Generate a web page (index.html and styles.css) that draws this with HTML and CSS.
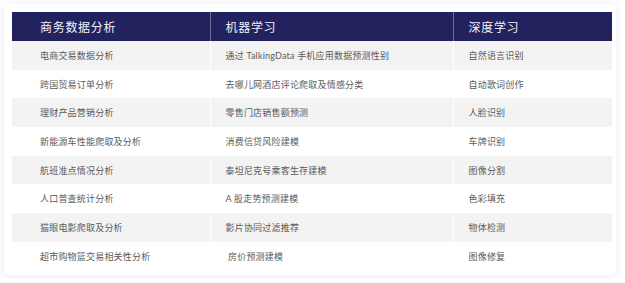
FILE: index.html
```html
<!DOCTYPE html>
<html lang="zh-CN">
<head>
<meta charset="utf-8">
<title>课程项目</title>
<link rel="stylesheet" href="styles.css">
</head>
<body>
<div class="card">
  <table class="grid">
    <colgroup>
      <col class="c1"><col class="c2"><col class="c3">
    </colgroup>
    <thead>
      <tr>
        <th class="first">商务数据分析</th>
        <th>机器学习</th>
        <th>深度学习</th>
      </tr>
    </thead>
    <tbody>
      <tr><td class="first">电商交易数据分析</td><td>通过 TalkingData 手机应用数据预测性别</td><td>自然语言识别</td></tr>
      <tr><td class="first">跨国贸易订单分析</td><td>去哪儿网酒店评论爬取及情感分类</td><td>自动歌词创作</td></tr>
      <tr><td class="first">理财产品营销分析</td><td>零售门店销售额预测</td><td>人脸识别</td></tr>
      <tr><td class="first">新能源车性能爬取及分析</td><td>消费信贷风险建模</td><td>车牌识别</td></tr>
      <tr><td class="first">航班准点情况分析</td><td>泰坦尼克号乘客生存建模</td><td>图像分割</td></tr>
      <tr><td class="first">人口普查统计分析</td><td>A 股走势预测建模</td><td>色彩填充</td></tr>
      <tr><td class="first">猫眼电影爬取及分析</td><td>影片协同过滤推荐</td><td>物体检测</td></tr>
      <tr><td class="first">超市购物篮交易相关性分析</td><td>&nbsp;房价预测建模</td><td>图像修复</td></tr>
    </tbody>
  </table>
</div>
</body>
</html>
```
FILE: styles.css
```css
html, body {
  margin: 0;
  padding: 0;
  background: #ffffff;
}
body {
  padding: 4px;
  font-family: "Lato", "Noto Sans CJK SC", sans-serif;
}
.card {
  width: 600px;
  padding: 8px 4px 4px 8px;
  background: #ffffff;
  border-radius: 6px;
  box-shadow: 0 1px 8px rgba(110, 110, 210, 0.16);
}
.grid {
  width: 600px;
  border-collapse: collapse;
  table-layout: fixed;
}
.c1 { width: 198px; }
.c2 { width: 243px; }
.c3 { width: 159px; }
.grid th {
  height: 29px;
  padding: 0 0 0 15px;
  background: #22225f;
  color: #f2f2f8;
  font-size: 12px;
  font-weight: normal;
  letter-spacing: 0.7px;
  text-align: left;
  border-left: 1px solid rgba(255, 255, 255, 0.35);
  white-space: nowrap;
}
.grid td {
  height: 28.7px;
  padding: 0 0 0 15px;
  color: #5a5a5a;
  font-size: 9px;
  letter-spacing: 0.2px;
  text-align: left;
  border-left: 1px solid #ffffff;
  white-space: nowrap;
}
.grid th:first-child,
.grid td:first-child {
  border-left: none;
}
.grid .first {
  padding-left: 28px;
}
.grid tbody tr:nth-child(odd) td {
  background: #f3f3f3;
}
```
